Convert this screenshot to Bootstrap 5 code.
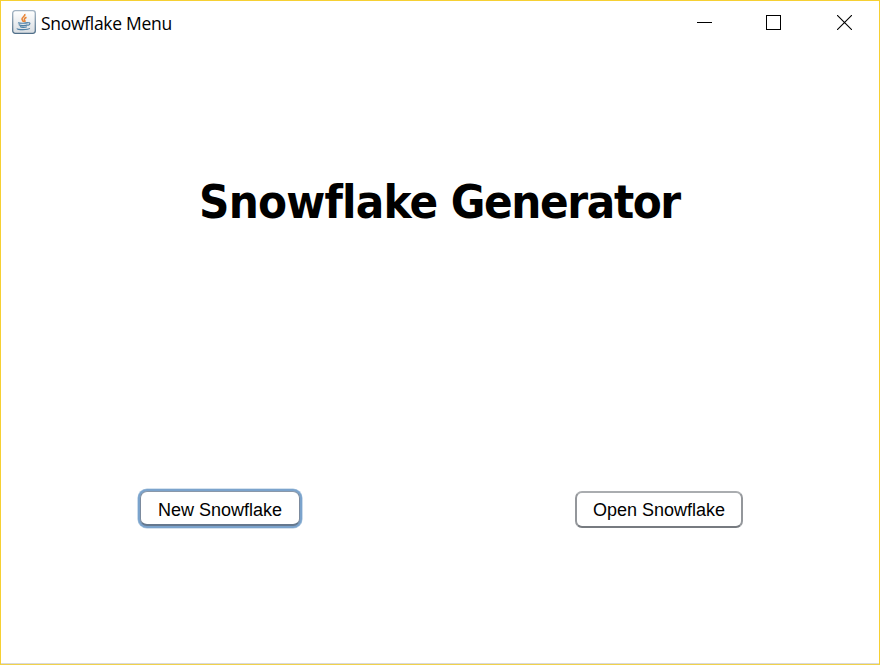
<!DOCTYPE html>
<html lang="en">
<head>
<meta charset="utf-8">
<title>Snowflake Menu</title>
<link href="https://cdn.jsdelivr.net/npm/bootstrap@5.3.0/dist/css/bootstrap.min.css" rel="stylesheet">
<style>
body{background:#fff;color:#000;overflow:hidden}
.app-window{width:880px;height:665px;border:1px solid #f6d033;border-bottom-color:#f0d24c;box-shadow:inset 0 -1px #d9d9d9}
.title-bar{height:44px;padding:9px 27px 0 11px}
.app-title{font:17.5px/28px "Open Sans",sans-serif;margin:-1px 0 0 5px;letter-spacing:-.3px}
.controls{gap:54px;margin-top:5px}
.control-close{margin-left:2px}
.app-heading{font:bold 47px/58px "DejaVu Sans Condensed","DejaVu Sans",sans-serif;font-stretch:condensed;margin:128px 0 0 198px;letter-spacing:-1.4px;white-space:nowrap;font-variant-ligatures:none}
.heading-lead{letter-spacing:-.8px}
.choices{padding:0 136px 0 137px;margin-top:260px}
.choice{font:18px/22px "Liberation Sans",Arial,sans-serif;color:#000;background:#fff;height:37px;padding:0;border:2px solid #999;border-color:#aaadb0 #94979b #777b80;border-radius:7px;font-variant-ligatures:none}
.choice:hover{background:#f8f8f8;color:#000}
.choice-new{width:160px;height:35px;padding-top:3px;margin-left:2px;border-color:#8a98a9 #7c8b9e #65788e;border-width:1px 1px 2px;box-shadow:0 0 0 2px #7ba3cc,0 0 0 2.6px #a9c5df}
.choice-open{width:168px}
</style>
<script src="https://cdn.jsdelivr.net/npm/bootstrap@5.3.0/dist/js/bootstrap.bundle.min.js"></script>
</head>
<body>
<main class="app-window d-flex flex-column">
<header class="title-bar d-flex align-items-start">
<svg width="24" height="24" viewBox="0 0 24 24" fill="none" aria-hidden="true">
<defs><linearGradient id="tile" x2="0" y2="1"><stop stop-color="#fff"/><stop offset="1" stop-color="#d9dde2"/></linearGradient>
<linearGradient id="edge" x2="0" y2="1"><stop stop-color="#a3b4c3"/><stop offset="1" stop-color="#506f89"/></linearGradient></defs>
<rect x=".7" y=".7" width="22.6" height="22.6" rx="2.5" fill="url(#tile)" stroke="url(#edge)" stroke-width="1.3"/>
<path d="M12.8 4c1 2-3.2 3.2-2.8 5.2.2 1 1.4 1.8 1.4 2.8M14.5 7.2c-2 1-2.7 1.9-1.8 3 .6.7.3 1.3-.2 1.9" stroke="#e88435" stroke-width="1.6"/>
<path d="M6 12.7c1.8.8 7.9.6 10 0M7 14.4c.2 1.5 7.2 1.5 8.6.4M8 16.6c1.4 1 5.2.9 6.8.1M16.2 12.6c2.8-.2 1.8 2.5-.6 2.8M5.2 18.3c-.5 1.8 10.8 1.8 12.6.1" stroke="#4d7fa5" stroke-width="1.2"/>
</svg>
<span class="app-title">Snowflake Menu</span>
<div class="controls d-flex ms-auto">
<svg width="15" height="15" shape-rendering="crispEdges"><path d="M0 7.5h15" stroke="#000"/></svg>
<svg width="15" height="15" shape-rendering="crispEdges"><path d="M.5.5h14v14H.5z" fill="none" stroke="#000"/></svg>
<svg class="control-close" width="15" height="15"><path d="M0 0l15 15M15 0L0 15" stroke="#000" stroke-width="1.1"/></svg>
</div>
</header>
<h1 class="app-heading"><span class="heading-lead">Snowflake</span> Generator</h1>
<div class="choices d-flex justify-content-between align-items-start">
<button class="btn choice choice-new" type="button">New Snowflake</button>
<button class="btn choice choice-open" type="button">Open Snowflake</button>
</div>
</main>
</body>
</html>
